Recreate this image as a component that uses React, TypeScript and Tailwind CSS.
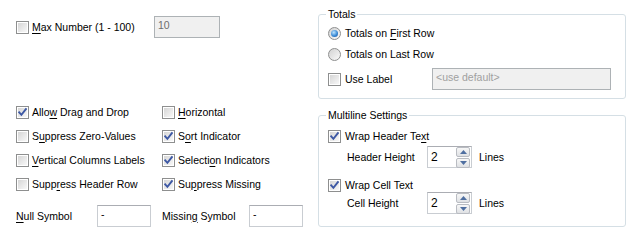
import React from "react";

function Check({ checked }: { checked?: boolean }) {
  return (
    <span className="relative inline-block w-[13px] h-[13px] shrink-0 border border-[#8e8f8f] bg-white">
      <span className="absolute inset-[1px] bg-linear-to-br from-[#d6d6d6] to-[#f8f8f8]" />
      {checked && (
        <svg className="absolute inset-0" width="11" height="11" viewBox="0 0 11 11">
          <path d="M2.2 5.3 L4.4 7.8 L8.9 2.2" fill="none" stroke="#3d58a4" strokeWidth="1.9" strokeLinecap="square" />
        </svg>
      )}
    </span>
  );
}

function Radio({ checked }: { checked?: boolean }) {
  return (
    <span className="inline-flex w-[13px] h-[13px] shrink-0 rounded-full border border-[#8e8f8f] bg-linear-to-br from-[#d2d2d2] to-[#fafafa] items-center justify-center">
      {checked && (
        <span className="w-[7px] h-[7px] rounded-full bg-[radial-gradient(circle_at_40%_35%,#bfe6ff_0%,#3a8ad6_55%,#1b4f95_100%)]" />
      )}
    </span>
  );
}

function U({ children }: { children: React.ReactNode }) {
  return <span className="underline underline-offset-[2px]">{children}</span>;
}

function CheckRow({ checked, children }: { checked?: boolean; children: React.ReactNode }) {
  return (
    <div className="flex items-center h-[24px]">
      <Check checked={checked} />
      <span className="ml-[3px] whitespace-nowrap">{children}</span>
    </div>
  );
}

function Field({ children, className }: { children?: React.ReactNode; className: string }) {
  return (
    <div className={"h-[22px] border border-[#c9cdd2] border-t-[#abadb3] pl-[3px] pt-[2px] leading-[13px] " + className}>
      {children}
    </div>
  );
}

function SpinArrow({ up }: { up?: boolean }) {
  return (
    <span className="flex items-center justify-center w-[14px] h-[10px] rounded-[2px] border border-[#b9bcc2] bg-linear-to-b from-[#f7f7f7] to-[#dfe1e4]">
      <svg width="7" height="4" viewBox="0 0 7 4">
        {up ? <path d="M0 4 L3.5 0 L7 4 Z" fill="#4f6fa0" /> : <path d="M0 0 L3.5 4 L7 0 Z" fill="#4f6fa0" />}
      </svg>
    </span>
  );
}

function Spinner({ label }: { label: string }) {
  return (
    <div className="flex items-center h-[22px] ml-[19px]">
      <span className="w-[80px]">{label}</span>
      <div className="relative w-[45px] h-[22px] border border-[#c9cdd2] border-t-[#abadb3] bg-white flex items-center">
        <span className="ml-[3px] text-[12px]">2</span>
        <div className="ml-auto mr-[1px] flex flex-col gap-[1px]">
          <SpinArrow up />
          <SpinArrow />
        </div>
      </div>
      <span className="ml-[7px]">Lines</span>
    </div>
  );
}

export default function App() {
  return (
    <div className="w-[632px] h-[244px] bg-white flex text-[10.5px] leading-[13px] text-black font-['Liberation_Sans',Arial,sans-serif]">
      {/* left column */}
      <div className="w-[318px] pl-[16px] flex flex-col">
        <div className="mt-[16px] flex items-center h-[22px]">
          <div className="w-[138px] flex items-center">
            <Check />
            <span className="ml-[3px]">
              <U>M</U>ax Number (1 - 100)
            </span>
          </div>
          <div className="w-[66px] h-[22px] border border-[#adb2b5] bg-[#f0f0f0] pl-[3px] pt-[2px] text-[#6d6d6d]">10</div>
        </div>

        <div className="mt-[62px] grid grid-cols-[146px_1fr]">
          <CheckRow checked>
            Allo<U>w</U> Drag and Drop
          </CheckRow>
          <CheckRow>
            <U>H</U>orizontal
          </CheckRow>
          <CheckRow>
            S<U>u</U>ppress Zero-Values
          </CheckRow>
          <CheckRow checked>
            S<U>o</U>rt Indicator
          </CheckRow>
          <CheckRow>
            <U>V</U>ertical Columns Labels
          </CheckRow>
          <CheckRow checked>
            Selecti<U>o</U>n Indicators
          </CheckRow>
          <CheckRow>
            Supp<U>r</U>ess Header Row
          </CheckRow>
          <CheckRow checked>
            Su<U>p</U>press Missing
          </CheckRow>
        </div>

        <div className="mt-[9px] flex items-center">
          <span className="w-[81px]">
            <U>N</U>ull Symbol
          </span>
          <Field className="w-[54px]">-</Field>
          <span className="ml-[11px] w-[87px]">
            Missin<U>g</U> Symbol
          </span>
          <Field className="w-[54px]">-</Field>
        </div>
      </div>

      {/* right column */}
      <div className="w-[308px] flex flex-col">
        <fieldset className="mt-[8px] border border-[#d5dfe5] rounded-[3px] px-[7px] pb-[8px]">
          <legend className="px-[2px]">Totals</legend>
          <div className="pl-[2px]">
            <div className="mt-[2px] h-[20px] flex items-center">
              <Radio checked />
              <span className="ml-[4px]">
                Totals on <U>F</U>irst Row
              </span>
            </div>
            <div className="mt-[1px] h-[20px] flex items-center">
              <Radio />
              <span className="ml-[4px]">Totals on Last Row</span>
            </div>
            <div className="mt-[4px] h-[22px] flex items-center">
              <div className="w-[104px] flex items-center">
                <Check />
                <span className="ml-[4px]">Use Label</span>
              </div>
              <div className="w-[179px] h-[22px] border border-[#adb2b5] bg-[#f0f0f0] pl-[3px] pt-[2px] text-[#a0a0a0]">
                &lt;use default&gt;
              </div>
            </div>
          </div>
        </fieldset>

        <fieldset className="mt-[10px] border border-[#d5dfe5] rounded-[3px] px-[7px] pb-[12px]">
          <legend className="px-[2px]">Multiline Settings</legend>
          <div className="pl-[2px]">
            <div className="mt-[7px] h-[14px] flex items-center">
              <Check checked />
              <span className="ml-[4px]">
                Wrap Header Te<U>x</U>t
              </span>
            </div>
            <div className="mt-[3px]">
              <Spinner label="Header Height" />
            </div>
            <div className="mt-[10px] h-[14px] flex items-center">
              <Check checked />
              <span className="ml-[4px]">Wrap Cell Text</span>
            </div>
            <Spinner label="Cell Height" />
          </div>
        </fieldset>
      </div>
    </div>
  );
}
